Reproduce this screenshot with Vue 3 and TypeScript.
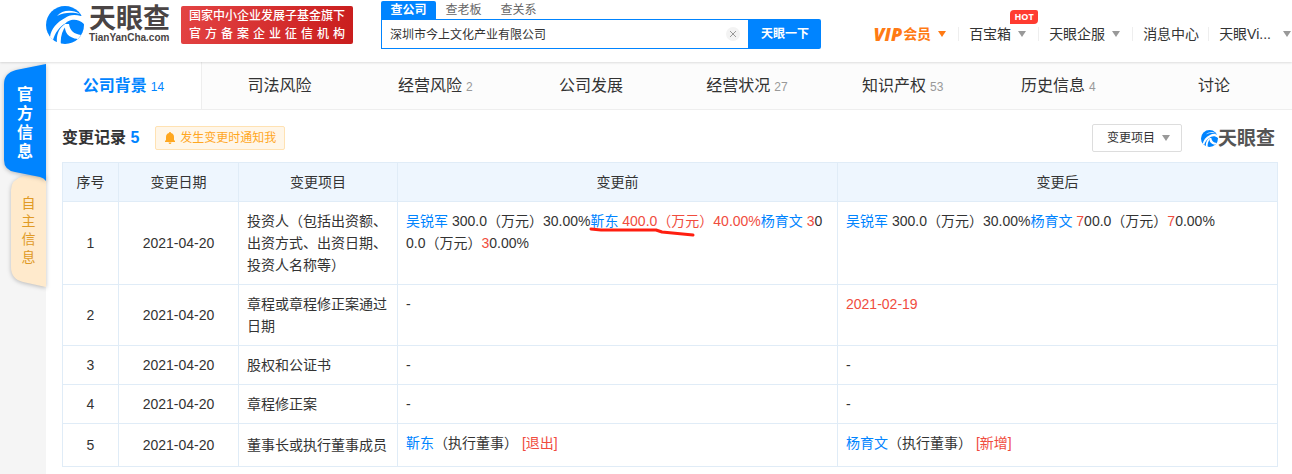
<script setup lang="ts">
import { ref } from 'vue'

type Tone = 'link' | 'diff' | 'marked'
interface Piece {
  text: string
  tone?: Tone
}
interface ChangeRow {
  id: number
  date: string
  item: string
  before: Piece[]
  after: Piece[]
}

const keyword = ref('深圳市今上文化产业有限公司')
const filter = ref('all')

const searchTabs = ['查公司', '查老板', '查关系']

const navTabs: { label: string; count?: number }[] = [
  { label: '公司背景', count: 14 },
  { label: '司法风险' },
  { label: '经营风险', count: 2 },
  { label: '公司发展' },
  { label: '经营状况', count: 27 },
  { label: '知识产权', count: 53 },
  { label: '历史信息', count: 4 },
  { label: '讨论' },
]

const columns = ['序号', '变更日期', '变更项目', '变更前', '变更后']

const rows: ChangeRow[] = [
  {
    id: 1,
    date: '2021-04-20',
    item: '投资人（包括出资额、出资方式、出资日期、投资人名称等）',
    before: [
      { text: '吴锐军', tone: 'link' },
      { text: ' 300.0（万元）30.00%' },
      { text: '靳东', tone: 'marked' },
      { text: ' 400.0（万元）40.00%', tone: 'diff' },
      { text: '杨育文', tone: 'link' },
      { text: ' 3', tone: 'diff' },
      { text: '00.0（万元）' },
      { text: '3', tone: 'diff' },
      { text: '0.00%' },
    ],
    after: [
      { text: '吴锐军', tone: 'link' },
      { text: ' 300.0（万元）30.00%' },
      { text: '杨育文', tone: 'link' },
      { text: ' 7', tone: 'diff' },
      { text: '00.0（万元）' },
      { text: '7', tone: 'diff' },
      { text: '0.00%' },
    ],
  },
  {
    id: 2,
    date: '2021-04-20',
    item: '章程或章程修正案通过日期',
    before: [{ text: '-' }],
    after: [{ text: '2021-02-19', tone: 'diff' }],
  },
  { id: 3, date: '2021-04-20', item: '股权和公证书', before: [{ text: '-' }], after: [{ text: '-' }] },
  { id: 4, date: '2021-04-20', item: '章程修正案', before: [{ text: '-' }], after: [{ text: '-' }] },
  {
    id: 5,
    date: '2021-04-20',
    item: '董事长或执行董事成员',
    before: [{ text: '靳东', tone: 'link' }, { text: '（执行董事） ' }, { text: '[退出]', tone: 'diff' }],
    after: [{ text: '杨育文', tone: 'link' }, { text: '（执行董事） ' }, { text: '[新增]', tone: 'diff' }],
  },
]
</script>

<template>
  <svg class="defs" width="0" height="0" aria-hidden="true">
    <symbol id="swirl" viewBox="0 0 38 38">
      <circle cx="19" cy="19" r="19" fill="#0084ff" />
      <path d="M11 10C16 4 26 3 34 8C27 6 18 6 11 10Z" fill="#fff" />
      <path d="M40 10L35 10C28 8 23 9 19 12C11 16 5 23 4 31L7 34C9 27 13 21 20 17C21 15 31 10 39 19Z" fill="#fff" />
      <path d="M19 18C13 22 10 29 11 37L15 39C14 32 16 25 20 20Z" fill="#fff" />
      <path d="M19 18C18 26 22 32 32 33L35 29C28 28 24 25 23 18Z" fill="#fff" />
    </symbol>
  </svg>

  <div class="page">
    <header class="top">
      <a class="brand" href="#" aria-label="天眼查">
        <svg class="brand-mark" aria-hidden="true"><use href="#swirl" /></svg>
        <span class="brand-text">
          <span class="brand-name">天眼查</span>
          <span class="brand-url">TianYanCha.com</span>
        </span>
      </a>
      <div class="banner">
        <span>国家中小企业发展子基金旗下</span>
        <span>官方备案企业征信机构</span>
      </div>

      <form class="search" @submit.prevent>
        <div class="search-tabs">
          <button v-for="(t, i) in searchTabs" :key="t" type="button" :class="{ on: i === 0 }">{{ t }}</button>
        </div>
        <div class="search-row">
          <div class="field">
            <input v-model="keyword" type="text" aria-label="企业名称" />
            <button class="clear" type="button" aria-label="清空" @click="keyword = ''">
              <svg viewBox="0 0 8 8" width="8" height="8"><path d="M1 1l6 6M7 1l-6 6" stroke="#999" fill="none" /></svg>
            </button>
          </div>
          <button class="go" type="submit">天眼一下</button>
        </div>
      </form>

      <nav class="menu">
        <a class="vip" href="#"><b>VIP</b><strong>会员</strong><i class="caret" /></a>
        <a href="#">百宝箱<i class="caret" /><em class="hot">HOT</em></a>
        <a href="#">天眼企服<i class="caret" /></a>
        <a class="plain" href="#">消息中心</a>
        <a class="user" href="#">天眼Vi...<i class="caret" /></a>
      </nav>
    </header>

    <div class="body">
      <aside class="side">
        <a class="side-tab official" href="#">
          <svg viewBox="0 0 42 117" aria-hidden="true">
            <path d="M42 0L12 6Q0 9 0 20V96Q0 106 11 108L36 113Q40 114 42 117Z" fill="#0084ff" />
          </svg>
          <span>官方信息</span>
        </a>
        <a class="side-tab self" href="#">
          <svg viewBox="0 0 35 112" aria-hidden="true">
            <path d="M35 0H12Q0 4 0 14V91Q0 103 12 106L35 111Z" fill="#ffeacc" />
          </svg>
          <span>自主信息</span>
        </a>
      </aside>

      <main class="main">
        <nav class="tabs">
          <a v-for="(t, i) in navTabs" :key="t.label" href="#" :class="{ on: i === 0 }">
            {{ t.label }}<small v-if="t.count">{{ t.count }}</small>
          </a>
        </nav>

        <section class="content">
          <div class="bar">
            <h2>变更记录 <span>5</span></h2>
            <button class="notify" type="button">
              <svg viewBox="0 0 10 12" width="10" height="12" aria-hidden="true">
                <path d="M5 0C5.700 0 6 .5 6 1.100C8 1.600 9 3.200 9 5V8L10 9V10H0V9L1 8V5C1 3.200 2 1.600 4 1.100C4 .5 4.300 0 5 0ZM3.500 10.500H6.500Q6.200 12 5 12T3.500 10.500Z" fill="#ffa71f" />
              </svg>
              发生变更时通知我
            </button>
            <div class="filter">
              <select v-model="filter" aria-label="变更项目">
                <option value="all">变更项目</option>
              </select>
              <i class="caret" />
            </div>
            <div class="mini-brand">
              <svg aria-hidden="true"><use href="#swirl" /></svg>
              <span>天眼查</span>
            </div>
          </div>

          <table>
            <colgroup>
              <col class="c-no" />
              <col class="c-date" />
              <col class="c-item" />
              <col />
              <col />
            </colgroup>
            <thead>
              <tr>
                <th v-for="c in columns" :key="c" scope="col">{{ c }}</th>
              </tr>
            </thead>
            <tbody>
              <tr v-for="r in rows" :key="r.id">
                <td class="mid">{{ r.id }}</td>
                <td class="mid">{{ r.date }}</td>
                <td>{{ r.item }}</td>
                <td v-for="(side, k) in [r.before, r.after]" :key="k" class="detail">
                  <template v-for="(p, n) in side" :key="n">
                    <a v-if="p.tone === 'link'" href="#">{{ p.text }}</a>
                    <a v-else-if="p.tone === 'marked'" class="marked" href="#">{{ p.text
                      }}<svg viewBox="0 0 106 10" width="106" height="10" aria-hidden="true">
                        <path d="M2 2L12 3L67 3L73 5L104 8" fill="none" stroke="#ff1e10" stroke-width="3" stroke-linecap="round" stroke-linejoin="round" />
                      </svg></a>
                    <span v-else :class="p.tone">{{ p.text }}</span>
                  </template>
                </td>
              </tr>
            </tbody>
          </table>
        </section>
      </main>
    </div>
  </div>
</template>

<style>
body {
  margin: 0;
  background: #fff;
}
</style>

<style scoped>
.defs {
  position: absolute;
}
.page {
  display: flex;
  flex-direction: column;
  min-height: 100vh;
  color: #333;
  font: 14px/22px 'Liberation Sans', 'Noto Sans CJK SC', sans-serif;
  text-spacing-trim: space-all;
}
.page * {
  box-sizing: border-box;
}
a {
  color: inherit;
  text-decoration: none;
}
button {
  padding: 0;
  border: 0;
  background: none;
  font: inherit;
  color: inherit;
  cursor: pointer;
}
.caret {
  display: inline-block;
  border: 4px solid transparent;
  border-top: 6px solid #999;
  border-bottom: 0;
}

.top {
  position: relative;
  z-index: 2;
  display: flex;
  align-items: flex-start;
  height: 62px;
  padding-left: 46px;
  background: #fff;
  box-shadow: 0 1px 2px rgba(0, 0, 0, 0.12);
}
.brand {
  display: flex;
  gap: 5px;
  width: 135px;
  padding-top: 6px;
}
.brand-mark {
  width: 38px;
  height: 38px;
}
.brand-text {
  display: flex;
  flex-direction: column;
  color: #4a4444;
  font-weight: 700;
}
.brand-name {
  font-size: 27px;
  line-height: 26px;
}
.brand-url {
  font-size: 10px;
  line-height: 12px;
}
.banner {
  width: 172px;
  margin-top: 6px;
  padding: 1px 8px;
  border-radius: 2px;
  background: linear-gradient(100deg, #e34343, #c91d1d);
  color: #fff;
  font-size: 12px;
  font-weight: 500;
  line-height: 18px;
}
.banner span {
  display: block;
  text-align-last: justify;
  white-space: nowrap;
}

.search {
  width: 440px;
  margin: 1px 0 0 28px;
  font-size: 12px;
}
.search-tabs {
  display: flex;
}
.search-tabs button {
  width: 55px;
  height: 18px;
  line-height: 18px;
  color: #666;
}
.search-tabs .on {
  border-radius: 2px 2px 0 0;
  background: #0084ff;
  color: #fff;
  font-weight: 700;
}
.search-row {
  display: flex;
  height: 30px;
}
.field {
  display: flex;
  flex: 1;
  align-items: center;
  padding: 0 8px;
  border: 1px solid #0084ff;
}
.field input {
  flex: 1;
  min-width: 0;
  padding: 1px 0 0;
  border: 0;
  outline: 0;
  color: #333;
  font: inherit;
}
.clear {
  display: flex;
  align-items: center;
  justify-content: center;
  width: 14px;
  height: 14px;
  border-radius: 50%;
  background: #f3f3f3;
}
.go {
  width: 72px;
  border-radius: 0 2px 2px 0;
  background: #0084ff;
  color: #fff;
  font-weight: 700;
}

.menu {
  display: flex;
  margin: 23px 0 0 auto;
  white-space: nowrap;
}
.menu a {
  position: relative;
  display: flex;
  align-items: center;
  padding: 0 12px 0 11px;
}
.menu a + a::before {
  content: '';
  position: absolute;
  left: 0;
  width: 1px;
  height: 14px;
  background: #eee;
}
.menu .caret {
  margin-left: 7px;
}
.menu .vip {
  color: #ff7a14;
}
.vip b {
  margin-right: 1px;
  font: italic 900 18px/22px 'Open Sans', sans-serif;
}
.vip .caret {
  border-top-color: #ff7a14;
}
.menu .plain {
  padding-right: 9px;
}
.menu .user {
  padding-right: 1px;
}
.user .caret {
  margin-left: 12px;
}
.menu .hot {
  position: absolute;
  top: -13px;
  right: 0;
  width: 28px;
  border-radius: 4px 2px 4px 0;
  background: #ff3b30;
  color: #fff;
  font: 700 9px/14px 'Open Sans', sans-serif;
  text-align: center;
}

.body {
  display: flex;
  flex: 1;
}
.side {
  display: flex;
  flex-direction: column;
  align-items: flex-end;
  width: 46px;
  padding-top: 2px;
  background: #f5f5f5;
}
.side-tab {
  display: grid;
  justify-items: center;
  align-items: center;
}
.side-tab svg,
.side-tab span {
  grid-area: 1 / 1;
}
.side-tab svg {
  width: 100%;
  filter: drop-shadow(0 1px 2px rgba(0, 0, 0, 0.25));
}
.side-tab span {
  position: relative;
  width: 1em;
  word-break: break-all;
}
.official {
  z-index: 1;
  width: 42px;
  color: #fff;
  font-size: 16px;
  font-weight: 700;
  line-height: 19px;
}
.self {
  width: 35px;
  margin-top: -5px;
  color: #e09a26;
  line-height: 18px;
}
.self span {
  padding-bottom: 4px;
}

.main {
  flex: 1;
  min-width: 0;
}
.tabs {
  display: grid;
  grid-template-columns: repeat(8, 1fr);
}
.tabs a {
  height: 48px;
  border-bottom: 1px solid #eee;
  background: #fcfcfc;
  font-size: 16px;
  line-height: 48px;
  text-align: center;
}
.tabs small {
  margin-left: 4px;
  color: #999;
  font-size: 12px;
  font-weight: 400;
}
.tabs .on {
  border-right: 1px solid #eee;
  background: #fff;
  font-weight: 700;
}
.tabs .on,
.tabs .on small {
  color: #0084ff;
}

.content {
  padding: 14px 14px 7px 16px;
}
.bar {
  display: flex;
  align-items: center;
  height: 28px;
  margin-bottom: 10px;
}
h2 {
  margin: 0 16px 0 0;
  font-size: 16px;
}
h2 span {
  color: #0084ff;
}
.notify {
  display: flex;
  gap: 5px;
  align-items: center;
  height: 24px;
  padding: 0 8px 0 9px;
  border: 1px solid #ffe2b3;
  border-radius: 2px;
  background: #fff6e8;
  color: #ffa71f;
  font-size: 12px;
}
.filter {
  display: grid;
  align-items: center;
  width: 90px;
  margin-left: auto;
}
.filter select,
.filter .caret {
  grid-area: 1 / 1;
}
.filter select {
  height: 28px;
  padding: 0 14px;
  border: 1px solid #ddd;
  border-radius: 2px;
  appearance: none;
  background: #fff;
  color: #333;
  font: inherit;
  font-size: 12px;
}
.filter .caret {
  justify-self: end;
  margin-right: 12px;
  pointer-events: none;
}
.mini-brand {
  display: flex;
  align-items: center;
  margin: 0 3px 0 19px;
  color: #555;
  font-size: 19px;
  font-weight: 700;
  line-height: 24px;
}
.mini-brand svg {
  width: 17px;
  height: 17px;
}
.mini-brand span {
  padding-top: 2px;
}

table {
  width: 100%;
  border-collapse: collapse;
  table-layout: fixed;
}
.c-no {
  width: 56px;
}
.c-date {
  width: 120px;
}
.c-item {
  width: 159px;
}
th,
td {
  padding: 8px;
  border: 1px solid #e0ecf7;
  word-break: break-all;
}
th {
  background: #eef6fe;
  font-weight: 400;
}
.mid {
  text-align: center;
}
.detail {
  vertical-align: top;
}
tbody tr:last-child {
  height: 43px;
}
.detail a {
  color: #0084ff;
}
.diff {
  color: #f04c3e;
}
.marked {
  position: relative;
}
.marked svg {
  position: absolute;
  top: 14px;
  left: -1px;
}
</style>
